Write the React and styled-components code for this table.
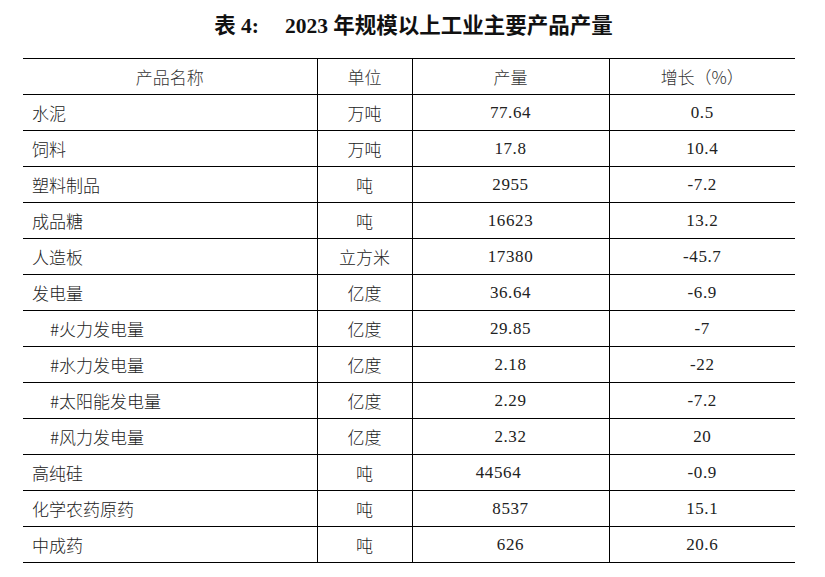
import React from 'react';
import styled, { createGlobalStyle } from 'styled-components';

const GlobalStyle = createGlobalStyle`
  html, body {
    margin: 0;
    padding: 0;
    background: #ffffff;
  }
  body {
    font-family: "Liberation Serif", "Noto Sans CJK SC", serif;
    color: #1a1a1a;
  }
`;

const rows = [
  { name: '水泥', unit: '万吨', output: '77.64', growth: '0.5' },
  { name: '饲料', unit: '万吨', output: '17.8', growth: '10.4' },
  { name: '塑料制品', unit: '吨', output: '2955', growth: '-7.2' },
  { name: '成品糖', unit: '吨', output: '16623', growth: '13.2' },
  { name: '人造板', unit: '立方米', output: '17380', growth: '-45.7' },
  { name: '发电量', unit: '亿度', output: '36.64', growth: '-6.9' },
  { name: '#火力发电量', unit: '亿度', output: '29.85', growth: '-7', sub: true },
  { name: '#水力发电量', unit: '亿度', output: '2.18', growth: '-22', sub: true },
  { name: '#太阳能发电量', unit: '亿度', output: '2.29', growth: '-7.2', sub: true },
  { name: '#风力发电量', unit: '亿度', output: '2.32', growth: '20', sub: true },
  { name: '高纯硅', unit: '吨', output: '44564', growth: '-0.9', shift: 24 },
  { name: '化学农药原药', unit: '吨', output: '8537', growth: '15.1' },
  { name: '中成药', unit: '吨', output: '626', growth: '20.6' }
];

const App = () => {
  return (
    <Page>
      <GlobalStyle />
      <Title>
        表 4:<Gap />2023 年规模以上工业主要产品产量
      </Title>
      <Table>
        <colgroup>
          <col style={{ width: 294 }} />
          <col style={{ width: 95 }} />
          <col style={{ width: 197 }} />
          <col style={{ width: 186 }} />
        </colgroup>
        <thead>
          <tr>
            <HeadCell>产品名称</HeadCell>
            <HeadCell>单位</HeadCell>
            <HeadCell>产量</HeadCell>
            <HeadCell>增长（%）</HeadCell>
          </tr>
        </thead>
        <tbody>
          {rows.map((row, index) => (
            <tr key={index}>
              <NameCell $sub={row.sub}>{row.name}</NameCell>
              <UnitCell>{row.unit}</UnitCell>
              <NumCell $shift={row.shift}>{row.output}</NumCell>
              <NumCell>{row.growth}</NumCell>
            </tr>
          ))}
        </tbody>
      </Table>
    </Page>
  );
};

export default App;

const Page = styled.div`
  width: 825px;
  padding-top: 13px;
`;

const Title = styled.h1`
  margin: 0 0 19px 0;
  height: 26px;
  line-height: 26px;
  text-align: center;
  font-family: "Liberation Serif", "Noto Sans CJK SC", serif;
  font-size: 21.5px;
  font-weight: 700;
  color: #111;
  padding-left: 2px;
`;

const Gap = styled.span`
  display: inline-block;
  width: 26px;
`;

const Table = styled.table`
  margin-left: 23px;
  width: 772px;
  border-collapse: collapse;
  table-layout: fixed;
  border-top: 1px solid #000;
  border-bottom: 1px solid #000;
`;

const Cell = styled.td`
  height: 35px;
  padding: 0;
  border-bottom: 1px solid #000;
  border-left: 1px solid #000;
  font-size: 17px;
  line-height: 35px;
  white-space: nowrap;
  vertical-align: middle;

  &:first-child {
    border-left: none;
  }
`;

const HeadCell = styled(Cell).attrs({ as: 'th' })`
  text-align: center;
  color: #333;
  font-family: "Noto Sans CJK SC", sans-serif;
  font-weight: 300;
`;

const NameCell = styled(Cell)`
  text-align: left;
  padding-left: ${(p) => (p.$sub ? 27 : 9)}px;
  font-family: "Noto Sans CJK SC", sans-serif;
  font-weight: 300;
  color: #222;
`;

const UnitCell = styled(Cell)`
  text-align: center;
  font-family: "Noto Sans CJK SC", sans-serif;
  font-weight: 300;
  color: #222;
`;

const NumCell = styled(Cell)`
  text-align: center;
  letter-spacing: 0.6px;
  padding-right: ${(p) => (p.$shift ? p.$shift : 0)}px;
  color: #222;
`;
